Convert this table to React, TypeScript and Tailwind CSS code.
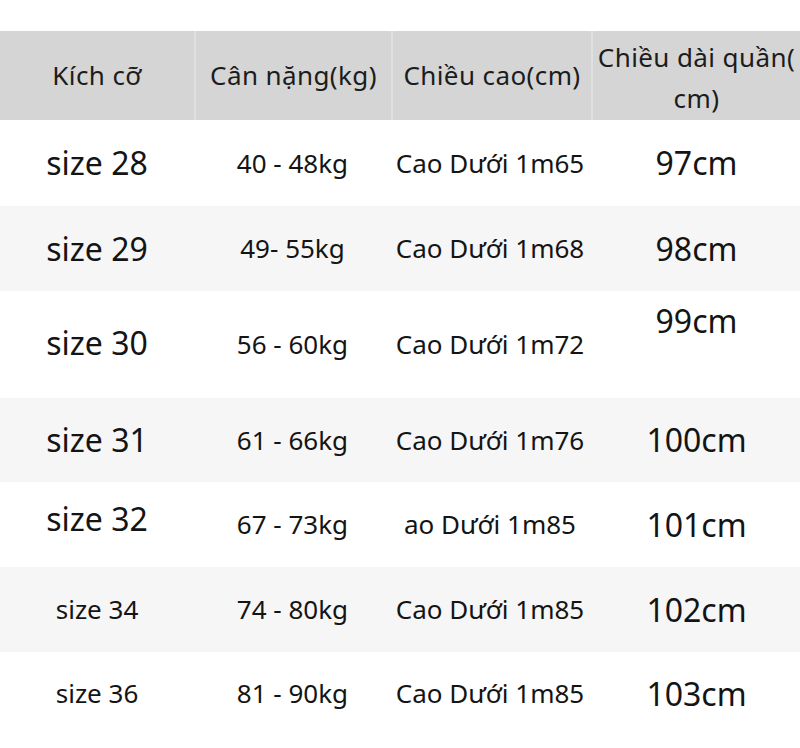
type Row = {
  size: string;
  big: boolean;
  kg: string;
  h: string;
  cm: string;
  rowH: string;
  bg: string;
  sizeShift?: string;
  cmShift?: string;
};

const rows: Row[] = [
  { size: 'size 28', big: true, kg: '40 - 48kg', h: 'Cao Dưới 1m65', cm: '97cm', rowH: 'h-[86px]', bg: 'bg-white' },
  { size: 'size 29', big: true, kg: '49- 55kg', h: 'Cao Dưới 1m68', cm: '98cm', rowH: 'h-[85px]', bg: 'bg-[#f6f6f6]' },
  { size: 'size 30', big: true, kg: '56 - 60kg', h: 'Cao Dưới 1m72', cm: '99cm', rowH: 'h-[107px]', bg: 'bg-white', sizeShift: '-translate-y-[2px]', cmShift: '-translate-y-[24px]' },
  { size: 'size 31', big: true, kg: '61 - 66kg', h: 'Cao Dưới 1m76', cm: '100cm', rowH: 'h-[84px]', bg: 'bg-[#f6f6f6]' },
  { size: 'size 32', big: true, kg: '67 - 73kg', h: 'ao Dưới 1m85', cm: '101cm', rowH: 'h-[85px]', bg: 'bg-white', sizeShift: '-translate-y-[6px]' },
  { size: 'size 34', big: false, kg: '74 - 80kg', h: 'Cao Dưới 1m85', cm: '102cm', rowH: 'h-[85px]', bg: 'bg-[#f6f6f6]' },
  { size: 'size 36', big: false, kg: '81 - 90kg', h: 'Cao Dưới 1m85', cm: '103cm', rowH: 'h-[83px]', bg: 'bg-white' },
];

const cols = 'grid grid-cols-[196px_197px_200px_207px]';

export default function App() {
  return (
    <div className="w-[800px] h-[748px] bg-white overflow-hidden text-[#141414] font-['Noto_Sans',sans-serif] pt-[31px]">
      <div className={`${cols} h-[89px] bg-[#d5d5d5] text-[26px] tracking-[0.4px] text-[#1c1c1c]`}>
        <div className="flex items-center justify-center border-r-2 border-[#e0e0e0]">Kích cỡ</div>
        <div className="flex items-center justify-center border-r-2 border-[#e0e0e0]">Cân nặng(kg)</div>
        <div className="flex items-center justify-center border-r-2 border-[#e0e0e0]">Chiều cao(cm)</div>
        <div className="flex flex-col items-center justify-center leading-[41px] translate-y-[2px]">
          <span>Chiều dài quần(</span>
          <span>cm)</span>
        </div>
      </div>
      {rows.map((r) => (
        <div key={r.size} className={`${cols} ${r.rowH} ${r.bg}`}>
          <div className="flex items-center justify-center">
            <span className={`${r.big ? 'text-[32px]' : 'text-[26px]'} ${r.sizeShift ?? ''} -translate-x-[1px]`}>{r.size}</span>
          </div>
          <div className="flex items-center justify-center text-[26px]">
            <span className="-translate-x-[2px]">{r.kg}</span>
          </div>
          <div className="flex items-center justify-center text-[26px]">
            <span className="-translate-x-[3px]">{r.h}</span>
          </div>
          <div className="flex items-center justify-center text-[32px]">
            <span className={r.cmShift ?? ''}>{r.cm}</span>
          </div>
        </div>
      ))}
    </div>
  );
}
